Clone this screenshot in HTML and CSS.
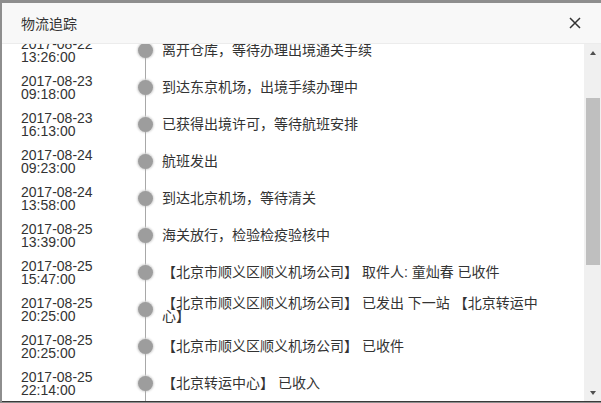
FILE: index.html
```html
<!DOCTYPE html>
<html>
  <head>
    <meta charset="utf-8">
    <title>物流追踪</title>
    <link rel="stylesheet" href="styles.css">
  </head>
  <body>
    <div class="modal">
      <div class="modal-head">
        <span class="modal-title">物流追踪</span>
        <svg class="modal-close" width="12" height="12" viewBox="0 0 12 12">
          <path d="M1 1 L11 11 M11 1 L1 11" stroke="#333" stroke-width="1.5" fill="none"/>
        </svg>
      </div>

      <div class="modal-body">
        <div class="track">
          <ul class="track-list">
            <li class="track-item">
              <div class="track-time"><span>2017-08-22</span><span>13:26:00</span></div>
              <div class="track-axis"><i class="axis-line"></i><i class="axis-dot"></i><i class="axis-line"></i></div>
              <div class="track-text">离开仓库，等待办理出境通关手续</div>
            </li>
            <li class="track-item">
              <div class="track-time"><span>2017-08-23</span><span>09:18:00</span></div>
              <div class="track-axis"><i class="axis-line"></i><i class="axis-dot"></i><i class="axis-line"></i></div>
              <div class="track-text">到达东京机场，出境手续办理中</div>
            </li>
            <li class="track-item">
              <div class="track-time"><span>2017-08-23</span><span>16:13:00</span></div>
              <div class="track-axis"><i class="axis-line"></i><i class="axis-dot"></i><i class="axis-line"></i></div>
              <div class="track-text">已获得出境许可，等待航班安排</div>
            </li>
            <li class="track-item">
              <div class="track-time"><span>2017-08-24</span><span>09:23:00</span></div>
              <div class="track-axis"><i class="axis-line"></i><i class="axis-dot"></i><i class="axis-line"></i></div>
              <div class="track-text">航班发出</div>
            </li>
            <li class="track-item">
              <div class="track-time"><span>2017-08-24</span><span>13:58:00</span></div>
              <div class="track-axis"><i class="axis-line"></i><i class="axis-dot"></i><i class="axis-line"></i></div>
              <div class="track-text">到达北京机场，等待清关</div>
            </li>
            <li class="track-item">
              <div class="track-time"><span>2017-08-25</span><span>13:39:00</span></div>
              <div class="track-axis"><i class="axis-line"></i><i class="axis-dot"></i><i class="axis-line"></i></div>
              <div class="track-text">海关放行，检验检疫验核中</div>
            </li>
            <li class="track-item">
              <div class="track-time"><span>2017-08-25</span><span>15:47:00</span></div>
              <div class="track-axis"><i class="axis-line"></i><i class="axis-dot"></i><i class="axis-line"></i></div>
              <div class="track-text">【北京市顺义区顺义机场公司】 取件人: 童灿春 已收件</div>
            </li>
            <li class="track-item">
              <div class="track-time"><span>2017-08-25</span><span>20:25:00</span></div>
              <div class="track-axis"><i class="axis-line"></i><i class="axis-dot"></i><i class="axis-line"></i></div>
              <div class="track-text">【北京市顺义区顺义机场公司】 已发出 下一站 【北京转运中心】</div>
            </li>
            <li class="track-item">
              <div class="track-time"><span>2017-08-25</span><span>20:25:00</span></div>
              <div class="track-axis"><i class="axis-line"></i><i class="axis-dot"></i><i class="axis-line"></i></div>
              <div class="track-text">【北京市顺义区顺义机场公司】 已收件</div>
            </li>
            <li class="track-item">
              <div class="track-time"><span>2017-08-25</span><span>22:14:00</span></div>
              <div class="track-axis"><i class="axis-line"></i><i class="axis-dot"></i><i class="axis-line"></i></div>
              <div class="track-text">【北京转运中心】 已收入</div>
            </li>
          </ul>
        </div>

        <div class="scrollbar">
          <span class="sb-btn"><i class="sb-arrow up"></i></span>
          <div class="sb-rail"><div class="sb-thumb"></div></div>
          <span class="sb-btn"><i class="sb-arrow down"></i></span>
        </div>
      </div>
    </div>
  </body>
</html>
```

FILE: styles.css
```css
html, body {
  margin: 0;
  height: 100%;
}
body {
  background: #8e8e8e;
  overflow: hidden;
  font-family: "Liberation Sans", "Noto Sans CJK SC", sans-serif;
  color: #333;
}
.modal {
  margin: 3px 0 0 2px;
  background: #fff;
  border-bottom: 1px solid #3a3a3a;
}
.modal-head {
  display: flex;
  align-items: center;
  justify-content: space-between;
  height: 40px;
  padding: 0 20px 0 19px;
  background: #f8f8f8;
  border-bottom: 1px solid #ececec;
}
.modal-title {
  font-family: "Noto Sans CJK SC", sans-serif;
  font-size: 14px;
  color: #333;
}
.modal-close {
  display: block;
}
.modal-body {
  display: flex;
  height: 357px;
}
.track {
  flex: 1;
  overflow: hidden;
}
.track-list {
  list-style: none;
  margin: -12px 0 0 0;
  padding: 0 0 0 19px;
}
.track-item {
  display: flex;
  align-items: stretch;
  height: 37px;
}
.track-time {
  display: flex;
  flex-direction: column;
  justify-content: center;
  width: 112px;
  font-size: 14px;
  line-height: 13px;
}
.track-axis {
  display: flex;
  flex-direction: column;
  align-items: center;
  width: 24px;
}
.axis-line {
  flex: 1;
  width: 1px;
  background: #a8a8a8;
}
.axis-dot {
  width: 15px;
  height: 15px;
  border-radius: 50%;
  background: #9d9d9d;
  box-shadow: 0 0 2px 1px #d4d4d4;
}
.track-text {
  display: flex;
  align-items: center;
  width: 380px;
  margin-left: 5px;
  font-size: 14px;
  line-height: 13px;
}
.scrollbar {
  display: flex;
  flex-direction: column;
  width: 17px;
  background: #f0f0f0;
}
.sb-btn {
  display: flex;
  align-items: center;
  justify-content: center;
  height: 17px;
}
.sb-arrow {
  width: 0;
  height: 0;
  border-left: 3.5px solid transparent;
  border-right: 3.5px solid transparent;
}
.sb-arrow.up {
  border-bottom: 4px solid #505050;
}
.sb-arrow.down {
  border-top: 4px solid #505050;
}
.sb-rail {
  flex: 1;
}
.sb-thumb {
  margin: 37px 1px 0 2px;
  height: 167px;
  background: #bfbfbf;
}
```
